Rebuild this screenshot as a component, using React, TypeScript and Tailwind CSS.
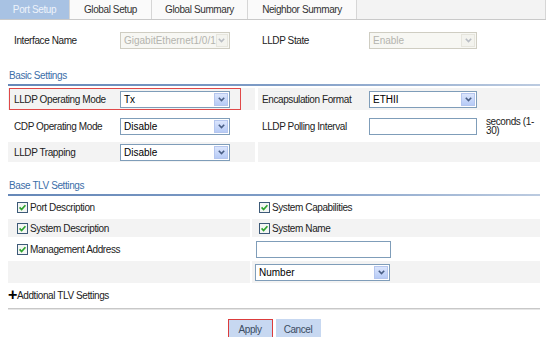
import React from "react";

const Chevron = ({ muted }: { muted?: boolean }) => (
  <svg width="7" height="5" viewBox="0 0 7 5">
    <path d="M0.8 0.8 L3.5 3.6 L6.2 0.8" fill="none" stroke={muted ? "#b9bdc4" : "#4a5f86"} strokeWidth="1.6" />
  </svg>
);

function Select({ value, className, disabled }: { value: string; className: string; disabled?: boolean }) {
  return (
    <div
      className={`flex h-[17px] items-center justify-between border ${className} ${
        disabled ? "border-[#cfcdc2] bg-[#f7f7f3] text-[#b4b4ae]" : "border-[#7f9db9] bg-white text-black"
      }`}
    >
      <span className="pl-[3px] text-[10px] tracking-normal">{value}</span>
      <span
        className={`mr-[1px] flex h-[13px] w-[14px] items-center justify-center border ${
          disabled ? "border-[#e6e5dd] bg-[#f3f3ee]" : "border-[#b5c6ee] bg-gradient-to-b from-[#dbe5fc] to-[#b7cbf6]"
        }`}
      >
        <Chevron muted={disabled} />
      </span>
    </div>
  );
}

const Check = () => (
  <svg width="11" height="11" viewBox="0 0 11 11" className="shrink-0">
    <rect x="0.5" y="0.5" width="10" height="10" fill="#f4f6f4" stroke="#3d5a78" />
    <path d="M2.6 5.4 L4.6 7.5 L8.4 3.2" fill="none" stroke="#2ea32e" strokeWidth="1.7" />
  </svg>
);

function SectionTitle({ children }: { children: React.ReactNode }) {
  return (
    <div className="mx-[8px]">
      <div className="pl-[1px] leading-[12px] text-[#3b6ea8]">{children}</div>
      <div className="mt-[2px] h-[2px] bg-gradient-to-r from-[#6688b8] via-[#7e9cc6] to-[#bccbe0]" />
    </div>
  );
}

const tabs = [
  { label: "Port Setup", w: "w-[70px]", active: true },
  { label: "Global Setup", w: "w-[82px]" },
  { label: "Global Summary", w: "w-[96px]" },
  { label: "Neighbor Summary", w: "w-[109px]" },
];

export default function App() {
  return (
    <div className="relative h-[337px] w-[548px] overflow-hidden bg-white font-['Liberation_Sans',Arial,sans-serif] text-[10px] tracking-[-0.4px] text-[#222]">
      {/* tabs */}
      <div className="flex h-[20px] w-[546px] border-b border-[#c9c9c9]">
        {tabs.map((t) => (
          <div
            key={t.label}
            className={`flex items-center justify-center border-r border-[#d6d6d6] ${t.w} ${
              t.active ? "bg-[#a8c2e3] text-[#eef3fb]" : "bg-[#fafafa] text-[#333]"
            }`}
          >
            {t.label}
          </div>
        ))}
        <div className="flex-1 border-r border-[#d6d6d6] bg-[#f3f3f3]" />
      </div>

      {/* interface row */}
      <div className="mt-[12px] flex h-[17px] items-center">
        <div className="w-[120px] pl-[14px]">Interface Name</div>
        <Select value="GigabitEthernet1/0/1" className="w-[110px]" disabled />
        <div className="w-[139px] pl-[32px]">LLDP State</div>
        <Select value="Enable" className="w-[108px]" disabled />
      </div>

      {/* basic settings */}
      <div className="mt-[21px]">
        <SectionTitle>Basic Settings</SectionTitle>
        <div className="mx-[8px] mt-[2px] flex flex-col gap-[2px]">
          <div className="flex h-[22px] gap-[3px]">
            <div className="relative flex w-[247px] items-center bg-[#f3f3f3]">
              <div className="w-[112px] pl-[6px]">LLDP Operating Mode</div>
              <Select value="Tx" className="w-[110px]" />
              <div className="absolute left-[1px] top-0 h-[22px] w-[232px] border border-[#e04848]" />
            </div>
            <div className="flex flex-1 items-center bg-[#f3f3f3]">
              <div className="w-[111px] pl-[4px]">Encapsulation Format</div>
              <Select value="ETHII" className="w-[108px]" />
            </div>
          </div>
          <div className="flex h-[28px] gap-[3px]">
            <div className="flex w-[247px] items-center">
              <div className="w-[112px] pl-[6px]">CDP Operating Mode</div>
              <Select value="Disable" className="w-[110px]" />
            </div>
            <div className="flex flex-1 items-center">
              <div className="w-[111px] pl-[4px]">LLDP Polling Interval</div>
              <div className="h-[17px] w-[108px] border border-[#7f9db9] bg-white" />
              <div className="ml-[9px] w-[54px] leading-[9px]">seconds (1-30)</div>
            </div>
          </div>
          <div className="flex h-[20px] gap-[3px]">
            <div className="flex w-[247px] items-center bg-[#f3f3f3]">
              <div className="w-[112px] pl-[6px]">LLDP Trapping</div>
              <Select value="Disable" className="w-[110px]" />
            </div>
            <div className="flex-1 bg-[#f3f3f3]" />
          </div>
        </div>
      </div>

      {/* base tlv */}
      <div className="mt-[18px]">
        <SectionTitle>Base TLV Settings</SectionTitle>
        <div className="mx-[8px] mt-[2px] flex flex-col gap-[2px]">
          <div className="flex h-[19px] gap-[2px]">
            <div className="flex w-[242px] items-center gap-[2px] pl-[9px]">
              <Check />
              Port Description
            </div>
            <div className="flex flex-1 items-center gap-[2px] pl-[7px]">
              <Check />
              System Capabilities
            </div>
          </div>
          <div className="flex h-[18px] gap-[2px]">
            <div className="flex w-[242px] items-center gap-[2px] bg-[#f3f3f3] pl-[9px]">
              <Check />
              System Description
            </div>
            <div className="flex flex-1 items-center gap-[2px] bg-[#f3f3f3] pl-[7px]">
              <Check />
              System Name
            </div>
          </div>
          <div className="flex h-[20px] gap-[2px]">
            <div className="flex w-[242px] items-center gap-[2px] pl-[9px]">
              <Check />
              Management Address
            </div>
            <div className="flex flex-1 items-center pl-[4px]">
              <div className="h-[17px] w-[135px] border border-[#7f9db9] bg-white" />
            </div>
          </div>
          <div className="flex h-[22px] gap-[2px]">
            <div className="w-[242px] bg-[#f3f3f3]" />
            <div className="flex flex-1 items-center bg-[#f3f3f3] pl-[3px]">
              <Select value="Number" className="w-[135px]" />
            </div>
          </div>
        </div>
      </div>

      {/* additional */}
      <div className="mx-[8px] mt-[6px] flex h-[12px] items-center">
        <span className="text-[16px] font-bold leading-[12px] text-black">+</span>
        <span>Addtional TLV Settings</span>
      </div>
      <div className="mx-[8px] mt-[7px] h-[2px] border-b border-[#e6e6e6] bg-[#c8c8c8]" />

      {/* buttons */}
      <div className="mt-[9px] flex justify-center gap-[3px]">
        <button className="h-[20px] w-[45px] border border-[#dc3c3c] bg-[#c7d8f1] text-[#3c4c62]">Apply</button>
        <button className="h-[20px] w-[45px] border border-[#c7d8f1] bg-[#c7d8f1] text-[#3c4c62]">Cancel</button>
      </div>
    </div>
  );
}
